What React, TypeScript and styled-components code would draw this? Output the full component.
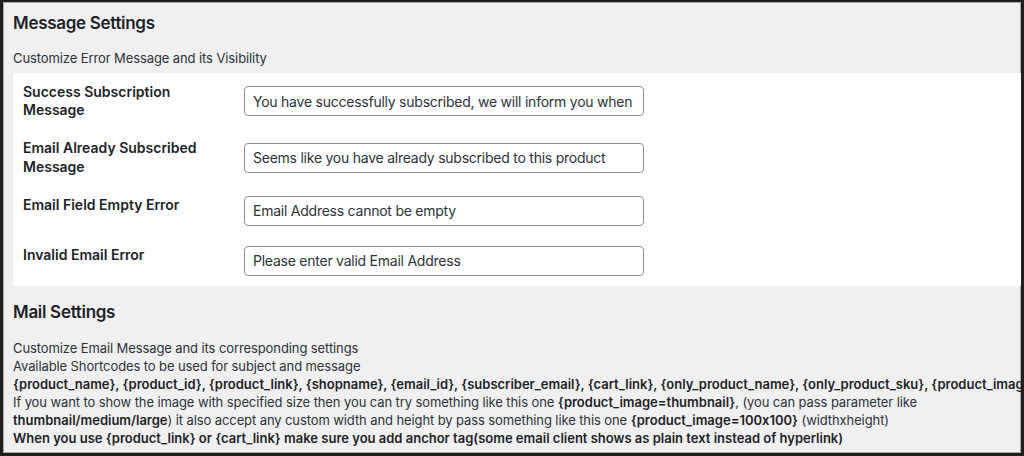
import React from "react";
import styled, { createGlobalStyle } from "styled-components";

const GlobalStyle = createGlobalStyle`
  html, body { margin: 0; padding: 0; background: #f0f0f1; }
  body { font-family: Inter, "Noto Sans", sans-serif; font-feature-settings: "calt" 0; }
  * { box-sizing: border-box; }
`;

const Frame = styled.div`
  width: 1024px;
  height: 456px;
  overflow: hidden;
  background: #f0f0f1;
  border-style: solid;
  border-color: #1e1e1e;
  border-width: 2px 3px 3px 3px;
  box-shadow: inset 0 0 0 1px #a7a7a7;
  padding-left: 10px;
  color: #1d2327;
  font-size: 13px;
  line-height: 18px;
`;

const SectionTitle = styled.h2<{ $top: number }>`
  margin: ${(p) => p.$top}px 0 0 0;
  font-size: 17px;
  line-height: 22px;
  font-weight: 600;
  letter-spacing: -0.3px;
  color: #1d2327;
`;

const Desc = styled.p`
  margin: 15px 0 6px 0;
  color: #2c3338;
  letter-spacing: -0.1px;
`;

const FormTable = styled.div`
  background: #fff;
  padding-left: 10px;
`;

const Row = styled.div`
  display: grid;
  grid-template-columns: 221px 400px;
`;

const Label = styled.div`
  padding: 10px 21px 10px 0;
  font-size: 14px;
  line-height: 18.2px;
  font-weight: 600;
  color: #1d2327;
  align-self: start;
`;

const Field = styled.div`
  padding: 10px 0;
  align-self: center;
`;

const TextInput = styled.input`
  display: block;
  width: 400px;
  height: 30px;
  padding: 0 8px;
  border: 1px solid #8c8f94;
  border-radius: 4px;
  background: #fff;
  color: #2c3338;
  font-family: Inter, "Noto Sans", sans-serif;
  font-size: 14px;
  letter-spacing: -0.24px;
  outline: none;
`;

const MailBlock = styled.div`
  margin-top: 16px;
  color: #2c3338;
  letter-spacing: -0.1px;
`;

const Line = styled.div`
  white-space: nowrap;
`;

const B = styled.strong`
  font-weight: 600;
  letter-spacing: 0;
  color: #1d2327;
`;

const rows = [
  { label: "Success Subscription Message", value: "You have successfully subscribed, we will inform you when this product back in stock" },
  { label: "Email Already Subscribed Message", value: "Seems like you have already subscribed to this product" },
  { label: "Email Field Empty Error", value: "Email Address cannot be empty" },
  { label: "Invalid Email Error", value: "Please enter valid Email Address" },
];

export default function App() {
  return (
    <>
      <GlobalStyle />
      <Frame>
        <SectionTitle $top={10}>Message Settings</SectionTitle>
        <Desc>Customize Error Message and its Visibility</Desc>
        <FormTable>
          {rows.map((r) => (
            <Row key={r.label}>
              <Label>{r.label}</Label>
              <Field>
                <TextInput type="text" defaultValue={r.value} />
              </Field>
            </Row>
          ))}
        </FormTable>
        <SectionTitle $top={15}>Mail Settings</SectionTitle>
        <MailBlock>
          <Line>Customize Email Message and its corresponding settings</Line>
          <Line>Available Shortcodes to be used for subject and message</Line>
          <Line>
            <B>
              {"{product_name}, {product_id}, {product_link}, {shopname}, {email_id}, {subscriber_email}, {cart_link}, {only_product_name}, {only_product_sku}, {product_image}"}
            </B>
          </Line>
          <Line>
            If you want to show the image with specified size then you can try something like this one{" "}
            <B>{"{product_image=thumbnail}"}</B>, (you can pass parameter like
          </Line>
          <Line>
            <B>thumbnail/medium/large</B>) it also accept any custom width and height by pass something like this one{" "}
            <B>{"{product_image=100x100}"}</B> (widthxheight)
          </Line>
          <Line>
            <B>
              {"When you use {product_link} or {cart_link} make sure you add anchor tag(some email client shows as plain text instead of hyperlink)"}
            </B>
          </Line>
        </MailBlock>
      </Frame>
    </>
  );
}
